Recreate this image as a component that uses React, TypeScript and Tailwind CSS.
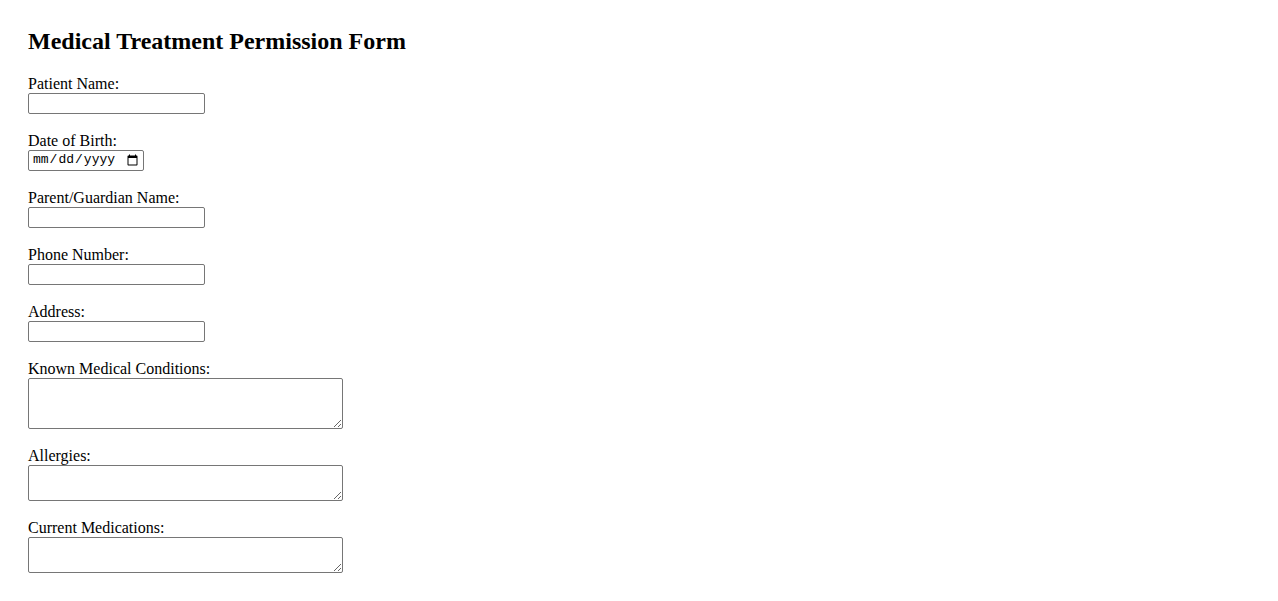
import React from "react";

const inputCls =
  "block w-[177px] h-[21px] border border-[#767676] rounded-[2px] px-[2px] py-[1px] text-[13.33px] bg-white";
const taCls =
  "block w-[315px] border border-[#767676] rounded-[2px] px-[2px] py-[2px] text-[13.33px] bg-white resize";

function Label({ children }: { children: React.ReactNode }) {
  return <label className="block text-[16px] leading-[18px] h-[18px]">{children}</label>;
}

export default function App() {
  return (
    <div
      className="min-h-screen bg-white text-black pl-[28px] pt-[28px] pb-[20px]"
      style={{ fontFamily: '"Liberation Serif", "Times New Roman", serif' }}
    >
      <h2 className="text-[24px] font-bold leading-[27.6px] mb-[19px]">
        Medical Treatment Permission Form
      </h2>
      <form className="flex flex-col gap-[18px]">
        <div>
          <Label>Patient Name:</Label>
          <input type="text" className={inputCls} />
        </div>
        <div>
          <Label>Date of Birth:</Label>
          <input
            type="date"
            className="block w-[116px] h-[21px] border border-[#767676] rounded-[2px] pl-[3px] pr-[2px] text-[13px] bg-white"
            style={{ fontFamily: '"Liberation Mono", "DejaVu Sans Mono", monospace' }}
          />
        </div>
        <div>
          <Label>Parent/Guardian Name:</Label>
          <input type="text" className={inputCls} />
        </div>
        <div>
          <Label>Phone Number:</Label>
          <input type="tel" className={inputCls} />
        </div>
        <div>
          <Label>Address:</Label>
          <input type="text" className={inputCls} />
        </div>
        <div>
          <Label>Known Medical Conditions:</Label>
          <textarea className={`${taCls} h-[51px]`} />
        </div>
        <div>
          <Label>Allergies:</Label>
          <textarea className={`${taCls} h-[36px]`} />
        </div>
        <div>
          <Label>Current Medications:</Label>
          <textarea className={`${taCls} h-[36px]`} />
        </div>
      </form>
    </div>
  );
}
